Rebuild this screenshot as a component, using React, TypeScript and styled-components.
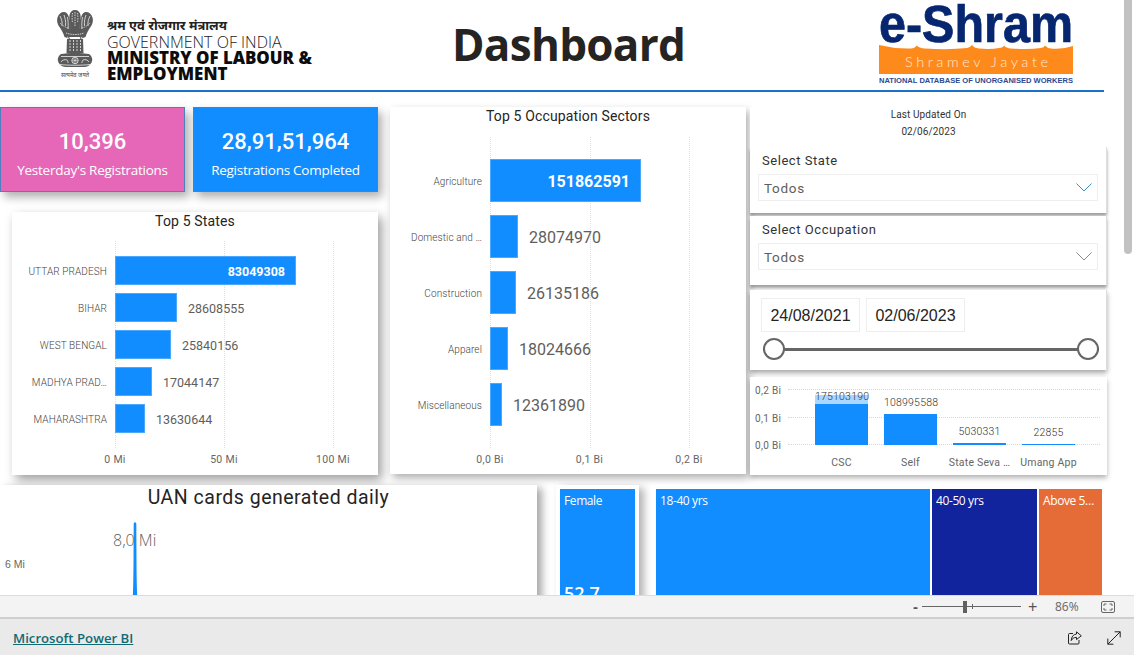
import React from "react";
import styled, { createGlobalStyle } from "styled-components";

const DIN = `Roboto, "Liberation Sans", sans-serif`;
const SEGOE = `"Open Sans", "Noto Sans", sans-serif`;
const BLUE = "#118dff";

const GlobalStyle = createGlobalStyle`
  html, body {
    margin: 0;
    padding: 0;
    height: 100%;
    overflow: hidden;
    background: #fff;
  }
  * { box-sizing: border-box; }
`;

type BarRow = { name: string; value: number; inside?: boolean };

const stateRows: BarRow[] = [
  { name: "UTTAR PRADESH", value: 83049308, inside: true },
  { name: "BIHAR", value: 28608555 },
  { name: "WEST BENGAL", value: 25840156 },
  { name: "MADHYA PRAD…", value: 17044147 },
  { name: "MAHARASHTRA", value: 13630644 },
];

const sectorRows: BarRow[] = [
  { name: "Agriculture", value: 151862591, inside: true },
  { name: "Domestic and …", value: 28074970 },
  { name: "Construction", value: 26135186 },
  { name: "Apparel", value: 18024666 },
  { name: "Miscellaneous", value: 12361890 },
];

const channels = [
  { name: "CSC", value: "175103190", height: 50, overlap: true },
  { name: "Self", value: "108995588", height: 31 },
  { name: "State Seva …", value: "5030331", height: 2 },
  { name: "Umang App", value: "22855", height: 1 },
];

function App() {
  return (
    <Page>
      <GlobalStyle />
      <Canvas>
        <Report>
          <Header>
            <Ministry>
              <Emblem />
              <MinistryText>
                <Hindi>श्रम एवं रोजगार मंत्रालय</Hindi>
                <GovLine>GOVERNMENT OF INDIA</GovLine>
                <MinistryLine>MINISTRY OF LABOUR &amp;</MinistryLine>
                <MinistryLine>EMPLOYMENT</MinistryLine>
              </MinistryText>
            </Ministry>
            <Title>Dashboard</Title>
            <ShramLogo />
          </Header>

          <MainGrid>
            <LeftColumn>
              <StatRow>
                <StatCard $bg="#e667b8">
                  <StatNumber>10,396</StatNumber>
                  <StatLabel>Yesterday's Registrations</StatLabel>
                </StatCard>
                <StatCard $bg={BLUE}>
                  <StatNumber>28,91,51,964</StatNumber>
                  <StatLabel>Registrations Completed</StatLabel>
                </StatCard>
              </StatRow>
              <StatesCard>
                <HBarChart
                  title="Top 5 States"
                  rows={stateRows}
                  labelWidth={103}
                  barHeight={29}
                  rowGap={8}
                  perValue={109 / 50000000}
                  step={109}
                  ticks={["0 Mi", "50 Mi", "100 Mi"]}
                  rowsTop={26}
                  axisTop={20}
                  valueSize={12.5}
                  gridReach={15}
                />
              </StatesCard>
            </LeftColumn>

            <SectorCard>
              <HBarChart
                title="Top 5 Occupation Sectors"
                rows={sectorRows}
                labelWidth={100}
                barHeight={43}
                rowGap={13}
                perValue={99.5 / 100000000}
                step={99.5}
                ticks={["0,0 Bi", "0,1 Bi", "0,2 Bi"]}
                rowsTop={34}
                axisTop={27}
                valueSize={16}
                gridReach={22}
              />
            </SectorCard>

            <RightColumn>
              <LastUpdated>
                <span>Last Updated On</span>
                <span>02/06/2023</span>
              </LastUpdated>
              <SlicerCard $height={66}>
                <SlicerLabel>Select State</SlicerLabel>
                <SelectBox>
                  <span>Todos</span>
                  <Chevron color="#3d8fc4" />
                </SelectBox>
              </SlicerCard>
              <SlicerCard $height={69} $top={3}>
                <SlicerLabel>Select Occupation</SlicerLabel>
                <SelectBox>
                  <span>Todos</span>
                  <Chevron color="#8a8a8a" />
                </SelectBox>
              </SlicerCard>
              <DateCard>
                <DateRow>
                  <DateBox>24/08/2021</DateBox>
                  <DateBox>02/06/2023</DateBox>
                </DateRow>
                <SliderTrack>
                  <SliderThumb />
                  <SliderThumb />
                </SliderTrack>
              </DateCard>
              <ColumnCard>
                <ColumnBody>
                  <YAxis>
                    <span>0,2 Bi</span>
                    <span>0,1 Bi</span>
                    <span>0,0 Bi</span>
                  </YAxis>
                  <ColumnPlot>
                    <HLines>
                      <HLine />
                      <HLine />
                      <HLine />
                    </HLines>
                    {channels.map((c) => (
                      <ColumnSlot key={c.name}>
                        <ColumnValue $overlap={c.overlap}>{c.value}</ColumnValue>
                        <ColumnBar style={{ height: c.height }} />
                      </ColumnSlot>
                    ))}
                  </ColumnPlot>
                </ColumnBody>
                <ColumnNames>
                  {channels.map((c) => (
                    <span key={c.name}>{c.name}</span>
                  ))}
                </ColumnNames>
              </ColumnCard>
            </RightColumn>
          </MainGrid>

          <BottomRow>
            <UanCard>
              <UanTitle>UAN cards generated daily</UanTitle>
              <AxisNote>6 Mi</AxisNote>
              <PeakNote>8,0 Mi</PeakNote>
              <Spike viewBox="0 0 6 75" width="6" height="75">
                <path d="M1.700 1.500 Q3 -1 4.300 1.500 L4.500 40 Q4.600 60 5.200 75 L0.800 75 Q1.400 60 1.500 40 Z" fill={BLUE} />
              </Spike>
            </UanCard>
            <GenderCard>
              <Tile $bg={BLUE} $width={75}>
                Female
                <TileValue>52,7</TileValue>
              </Tile>
            </GenderCard>
            <AgeCard>
              <Tile $bg={BLUE} $width={274}>18-40 yrs</Tile>
              <Tile $bg="#12239e" $width={105}>40-50 yrs</Tile>
              <Tile $bg="#e66c37" $width={63}>Above 5…</Tile>
            </AgeCard>
          </BottomRow>
        </Report>
        <ScrollGutter>
          <ScrollThumb />
        </ScrollGutter>
      </Canvas>

      <ZoomBar>
        <ZoomSign>-</ZoomSign>
        <ZoomSlider>
          <ZoomMark />
          <ZoomTick />
        </ZoomSlider>
        <ZoomPlus>+</ZoomPlus>
        <ZoomPercent>86%</ZoomPercent>
        <FitIcon viewBox="0 0 14 12" width="14" height="12">
          <rect x="0.5" y="0.5" width="13" height="11" rx="1.5" fill="none" stroke="#666" />
          <path d="M3 5V3h2.5M8.5 3H11v2M11 7v2H8.5M5.5 9H3V7" fill="none" stroke="#666" />
        </FitIcon>
      </ZoomBar>

      <Footer>
        <PowerBiLink href="#">Microsoft Power BI</PowerBiLink>
        <FooterIcons>
          <svg viewBox="0 0 14 14" width="14" height="14" fill="none" stroke="#222" strokeWidth="1">
            <path d="M5 2.5H1.5a1 1 0 0 0-1 1v8.5a1 1 0 0 0 1 1h8.5a1 1 0 0 0 1-1V9" />
            <path d="M8.5 0.8 13.3 4.8 8.5 8.6V6.4C6 6.4 4.3 7.4 3.2 9.6 3.4 6 5.2 3.3 8.5 3Z" />
          </svg>
          <svg viewBox="0 0 14 14" width="14" height="14" fill="none" stroke="#222" strokeWidth="1">
            <path d="M0.8 13.2 13.2 0.8M7.6 0.8h5.6v5.6M0.8 7.6v5.6h5.6" />
          </svg>
        </FooterIcons>
      </Footer>
    </Page>
  );
}

type HBarProps = {
  title: string;
  rows: BarRow[];
  labelWidth: number;
  barHeight: number;
  rowGap: number;
  perValue: number;
  step: number;
  ticks: string[];
  rowsTop: number;
  axisTop: number;
  valueSize: number;
  gridReach: number;
};

function HBarChart(props: HBarProps) {
  const { title, rows, labelWidth, barHeight, rowGap, perValue, step, ticks, rowsTop, axisTop, valueSize, gridReach } = props;
  return (
    <>
      <ChartTitle>{title}</ChartTitle>
      <Plot $top={rowsTop} $gap={rowGap}>
        <GridLines $left={labelWidth} $step={step} $reach={gridReach}>
          {ticks.map((t) => (
            <GridLine key={t} />
          ))}
        </GridLines>
        {rows.map((r) => (
          <Row key={r.name} $labelWidth={labelWidth} $height={barHeight}>
            <RowLabel>{r.name}</RowLabel>
            <BarTrack>
              <Bar style={{ width: Math.round(r.value * perValue) }}>
                {r.inside && <InsideValue $size={valueSize}>{r.value}</InsideValue>}
              </Bar>
              {!r.inside && <OutsideValue $size={valueSize}>{r.value}</OutsideValue>}
            </BarTrack>
          </Row>
        ))}
      </Plot>
      <TickRow $left={labelWidth - step / 2} $top={axisTop}>
        {ticks.map((t) => (
          <Tick key={t} $width={step}>{t}</Tick>
        ))}
      </TickRow>
    </>
  );
}

function Emblem() {
  return (
    <EmblemWrap>
      <EmblemArt viewBox="0 0 38 60" width="38" height="60">
        {/* lion capital: three heads, neck, then the abacus with the wheel */}
        <g fill="#5a5a5a">
          <path d="M19 1c-3 0-5 2-5.500 5-.5 3 0 6 1 9l-1 13h11l-1-13c1-3 1.500-6 1-9C24 3 22 1 19 1Z" />
          <path d="M8 3C5 3 2.500 5 1.500 8.500.5 12 1.500 15 3.500 18c2 3 4 6 5 10l5.500 2 1-16c-1-2-1.500-5-2.500-7C11.500 4.500 10 3 8 3Z" />
          <path d="M30 3c3 0 5.500 2 6.500 5.500 1 3.500 0 6.500-2 9.500s-4 6-5 10L24 30l-1-16c1-2 1.500-5 2.500-7C26.500 4.500 28 3 30 3Z" />
          <path d="M11 30h16l.5 14h-17Z" />
          <path d="M5 45c6-1.500 22-1.500 28 0 3 2 4 5.500 2.500 8.500-1.500 3-4.500 4.500-7.500 4.500H10c-3 0-6-1.500-7.500-4.500C1 50.500 2 47 5 45Z" />
        </g>
        <g fill="none" stroke="#fff" strokeWidth="0.8" opacity="0.9">
          <path d="M4 7c1.500 3 2.500 6 2 10M8 6c1 3 2 6 1.500 11M11.500 8c.5 4 1 7 .5 12M34 7c-1.500 3-2.500 6-2 10M30 6c-1 3-2 6-1.500 11M26.500 8c-.5 4-1 7-.5 12" />
          <path d="M16.500 4c-.5 3-.5 7 0 10M19 3v14M21.500 4c.5 3 .5 7 0 10" strokeDasharray="1.500 1" />
          <path d="M4 14c3 3 6 5 9 5M34 14c-3 3-6 5-9 5" strokeDasharray="1 1" />
          <path d="M10 24c5 2 13 2 18 0M11 28c4 1.500 12 1.500 16 0" strokeDasharray="1.500 0.8" />
          <path d="M14 31v12M17.500 31v12M21 31v12M24.500 31v12" strokeDasharray="2 1" />
          <path d="M5 47.500h28M4 55.500c8 1 22 1 30 0" />
          <circle cx="19" cy="51.500" r="3.200" />
          <path d="M19 48.300v6.400M15.800 51.500h6.400M16.700 49.200l4.600 4.600M21.300 49.200l-4.600 4.600" strokeWidth="0.5" />
          <path d="M5 53c1-2 4-3 6-2 1 1 1 2 1 3M33 53c-1-2-4-3-6-2-1 1-1 2-1 3" />
        </g>
      </EmblemArt>
      <EmblemMotto>सत्यमेव जयते</EmblemMotto>
    </EmblemWrap>
  );
}

function ShramLogo() {
  return (
    <LogoArt viewBox="0 0 194 84" width="194" height="84">
      <text x="0" y="40" fontFamily='"Liberation Sans", sans-serif' fontWeight="700" fontSize="51" fill="#06266f" stroke="#06266f" strokeWidth="0.7" textLength="194" lengthAdjust="spacingAndGlyphs">
        e-Shram
      </text>
      <path
        d="M0 43 Q16 47 32 46.500 Q36 46 38 43.500 Q40 46 46 46.500 Q70 48 88 46 Q91 45.500 93 43 Q95 46 100 46.500 Q112 47.500 120 46 Q124 45.500 125 43.500 Q127 46 132 46.500 Q150 47.500 162 46 Q165 45.500 166 43.500 Q168 46 172 46.500 Q184 47.500 194 44 V72 H0 Z"
        fill="#ff8a1c"
      />
      <text x="26" y="65" fontFamily="Lato, sans-serif" fontWeight="300" fontSize="14.500" fill="#ffe9cf" textLength="143" lengthAdjust="spacing">
        Shramev Jayate
      </text>
      <text x="0" y="81" fontFamily='"Liberation Sans", sans-serif' fontWeight="700" fontSize="7.300" fill="#2c4a94" textLength="194" lengthAdjust="spacingAndGlyphs">
        NATIONAL DATABASE OF UNORGANISED WORKERS
      </text>
    </LogoArt>
  );
}

function Chevron({ color }: { color: string }) {
  return (
    <svg viewBox="0 0 16 9" width="16" height="9" fill="none" stroke={color} strokeWidth="1">
      <path d="M0.500 0.500 8 8 15.500 0.500" />
    </svg>
  );
}

const Page = styled.div`
  width: 1134px;
  height: 655px;
  display: flex;
  flex-direction: column;
  overflow: hidden;
  background: #fff;
`;

const Canvas = styled.div`
  height: 595px;
  display: flex;
  overflow: hidden;
`;

const Report = styled.div`
  width: 1124px;
  flex: none;
`;

const ScrollGutter = styled.div`
  flex: 1;
`;

const ScrollThumb = styled.div`
  width: 8px;
  height: 254px;
  background: #c2c2c2;
  border-radius: 0 0 4px 4px;
`;

const Header = styled.header`
  width: 1104px;
  height: 92px;
  padding-left: 55px;
  border-bottom: 2px solid #1a73c9;
  display: grid;
  grid-template-columns: 397px 427px 194px;
`;

const Ministry = styled.div`
  display: flex;
  gap: 12px;
  padding-top: 9px;
`;

const EmblemWrap = styled.div`
  width: 40px;
  display: flex;
  flex-direction: column;
  align-items: center;
`;

const EmblemArt = styled.svg`
  filter: blur(0.3px);
`;

const EmblemMotto = styled.span`
  margin-top: 2px;
  font-family: "Noto Sans", "DejaVu Sans", sans-serif;
  font-size: 5.800px;
  line-height: 9px;
  color: #444;
  white-space: nowrap;
`;

const MinistryText = styled.div`
  display: flex;
  flex-direction: column;
  padding-top: 7px;
`;

const Hindi = styled.span`
  font-family: "Noto Sans", "DejaVu Sans", sans-serif;
  font-size: 13px;
  font-weight: 700;
  line-height: 18px;
  color: #222;
  white-space: nowrap;
`;

const GovLine = styled.span`
  font-family: ${SEGOE};
  font-size: 16px;
  font-weight: 300;
  line-height: 16px;
  color: #222;
  white-space: nowrap;
`;

const MinistryLine = styled.span`
  font-family: ${SEGOE};
  font-size: 16.900px;
  font-weight: 800;
  line-height: 16px;
  color: #0c0c0c;
  white-space: nowrap;
`;

const Title = styled.h1`
  margin: 0;
  padding-top: 10px;
  font-family: ${SEGOE};
  font-size: 44px;
  font-weight: 700;
  line-height: 68px;
  letter-spacing: -0.7px;
  color: #252423;
`;

const LogoArt = styled.svg`
  margin-top: 2px;
`;

const MainGrid = styled.div`
  margin-top: 15px;
  display: grid;
  grid-template-columns: 378px 356px 357px;
  column-gap: 12px;
  height: 368px;
`;

const LeftColumn = styled.div`
  display: flex;
  flex-direction: column;
  gap: 20px;
`;

const StatRow = styled.div`
  display: flex;
  gap: 8px;
`;

const StatCard = styled.div<{ $bg: string }>`
  width: 185px;
  height: 85px;
  padding-top: 20px;
  display: flex;
  flex-direction: column;
  align-items: center;
  background: ${(p) => p.$bg};
  border: 1px solid #4f80bd;
  box-shadow: 4px 5px 9px rgba(0, 0, 0, 0.32);
  color: #fff;
`;

const StatNumber = styled.span`
  font-family: ${DIN};
  font-size: 22px;
  font-weight: 500;
  line-height: 28px;
`;

const StatLabel = styled.span`
  font-family: ${SEGOE};
  font-size: 13.500px;
  font-weight: 400;
  line-height: 20px;
  margin-top: 4px;
  letter-spacing: -0.25px;
  white-space: nowrap;
`;

const StatesCard = styled.div`
  margin-left: 12px;
  width: 366px;
  height: 263px;
  background: #fff;
  box-shadow: 4px 5px 10px rgba(0, 0, 0, 0.38);
`;

const SectorCard = styled.div`
  width: 356px;
  height: 367px;
  background: #fff;
  box-shadow: 3px 4px 8px rgba(0, 0, 0, 0.32);
`;

const ChartTitle = styled.div`
  font-family: ${DIN};
  font-size: 14px;
  line-height: 18px;
  letter-spacing: 0.15px;
  text-align: center;
  color: #252423;
`;

const Plot = styled.div<{ $top: number; $gap: number }>`
  position: relative;
  margin-top: ${(p) => p.$top}px;
  display: flex;
  flex-direction: column;
  gap: ${(p) => p.$gap}px;
`;

const GridLines = styled.div<{ $left: number; $step: number; $reach: number }>`
  position: absolute;
  left: ${(p) => p.$left}px;
  top: -${(p) => p.$reach}px;
  bottom: -${(p) => p.$reach}px;
  display: flex;
  gap: ${(p) => p.$step - 1}px;
`;

const GridLine = styled.i`
  width: 1px;
  border-left: 1px dotted #e0e0e0;
`;

const Row = styled.div<{ $labelWidth: number; $height: number }>`
  position: relative;
  display: grid;
  grid-template-columns: ${(p) => p.$labelWidth}px 1fr;
  height: ${(p) => p.$height}px;
  align-items: center;
`;

const RowLabel = styled.span`
  padding: 2px 8px 0 0;
  font-family: ${DIN};
  font-size: 10px;
  font-weight: 300;
  letter-spacing: 0.1px;
  text-align: right;
  color: #444;
  white-space: nowrap;
`;

const BarTrack = styled.div`
  height: 100%;
  display: flex;
  align-items: center;
`;

const Bar = styled.div`
  height: 100%;
  display: flex;
  align-items: center;
  justify-content: flex-end;
  background: ${BLUE};
  box-shadow: inset 0 0 0 1px #4aa8ff;
`;

const InsideValue = styled.span<{ $size: number }>`
  padding: 2px 11px 0 0;
  font-family: ${DIN};
  font-size: ${(p) => p.$size}px;
  font-weight: 700;
  color: #fff;
`;

const OutsideValue = styled.span<{ $size: number }>`
  padding: 2px 0 0 11px;
  font-family: ${DIN};
  font-size: ${(p) => p.$size}px;
  color: #605e5c;
`;

const TickRow = styled.div<{ $left: number; $top: number }>`
  display: flex;
  margin-top: ${(p) => p.$top}px;
  padding-left: ${(p) => p.$left}px;
`;

const Tick = styled.span<{ $width: number }>`
  width: ${(p) => p.$width}px;
  flex: none;
  text-align: center;
  font-family: ${DIN};
  font-size: 10.500px;
  line-height: 14px;
  letter-spacing: 0.3px;
  color: #666;
`;

const RightColumn = styled.div`
  margin-left: -8px;
  width: 357px;
  display: flex;
  flex-direction: column;
`;

const LastUpdated = styled.div`
  height: 40px;
  display: flex;
  flex-direction: column;
  align-items: center;
  gap: 2px;
  background: #fff;
  font-family: ${DIN};
  font-size: 10px;
  line-height: 15px;
  letter-spacing: 0.1px;
  color: #333;
`;

const SlicerCard = styled.div<{ $height: number; $top?: number }>`
  height: ${(p) => p.$height}px;
  margin-top: ${(p) => p.$top ?? 0}px;
  padding: 5px 8px 0;
  background: #fff;
  border-right: 1px solid #ddd;
  box-shadow: 0 3px 3px rgba(0, 0, 0, 0.38);
`;

const SlicerLabel = styled.div`
  padding-left: 4px;
  font-family: ${DIN};
  font-size: 13px;
  line-height: 18px;
  letter-spacing: 0.55px;
  color: #333;
`;

const SelectBox = styled.div`
  height: 27px;
  margin-top: 4px;
  padding: 0 5px;
  display: flex;
  align-items: center;
  justify-content: space-between;
  border: 1px solid #eee;
  font-family: ${DIN};
  font-size: 13.500px;
  letter-spacing: 0.7px;
  color: #605e5c;
`;

const DateCard = styled.div`
  height: 80px;
  margin-top: 5px;
  padding: 8px 7px 0 11px;
  background: #fff;
  border-right: 1px solid #ddd;
  box-shadow: 0 3px 5px rgba(0, 0, 0, 0.35);
`;

const DateRow = styled.div`
  display: flex;
  gap: 6px;
`;

const DateBox = styled.div`
  width: 99px;
  height: 34px;
  padding-top: 1px;
  display: flex;
  align-items: center;
  justify-content: center;
  border: 1px solid #eee;
  font-family: "Liberation Sans", sans-serif;
  font-size: 16px;
  color: #252423;
`;

const SliderTrack = styled.div`
  margin: 6px 0 0 2px;
  height: 22px;
  display: flex;
  justify-content: space-between;
  align-items: center;
  background: linear-gradient(#666, #666) center / 100% 3px no-repeat;
`;

const SliderThumb = styled.i`
  width: 22px;
  height: 22px;
  border: 2px solid #666;
  border-radius: 50%;
  background: #fff;
`;

const ColumnCard = styled.div`
  height: 98px;
  margin-top: 7px;
  padding: 12px 0 0 5px;
  background: #fff;
  box-shadow: 0 3px 5px rgba(0, 0, 0, 0.3);
`;

const ColumnBody = styled.div`
  display: flex;
`;

const YAxis = styled.div`
  width: 33px;
  height: 56px;
  display: flex;
  flex-direction: column;
  justify-content: space-between;
  font-family: ${DIN};
  font-size: 10px;
  letter-spacing: 0.3px;
  color: #666;

  span {
    height: 1px;
    line-height: 3px;
  }
`;

const ColumnPlot = styled.div`
  position: relative;
  width: 312px;
  height: 56px;
  padding-left: 27px;
  display: flex;
  gap: 16px;
  align-items: flex-end;
`;

const HLines = styled.div`
  position: absolute;
  inset: 0;
  display: flex;
  flex-direction: column;
  justify-content: space-between;
`;

const HLine = styled.i`
  border-top: 1px dotted #d8d8d8;
`;

const ColumnSlot = styled.div`
  position: relative;
  width: 53px;
  display: flex;
  flex-direction: column;
  align-items: center;
`;

const ColumnValue = styled.span<{ $overlap?: boolean }>`
  position: relative;
  width: 100%;
  margin-bottom: ${(p) => (p.$overlap ? -9 : 4)}px;
  white-space: nowrap;
  text-align: center;
  font-family: ${DIN};
  font-size: 10.500px;
  font-weight: 300;
  line-height: 14px;
  letter-spacing: 0.2px;
  color: #333;
  background: ${(p) => (p.$overlap ? "rgba(255, 255, 255, 0.65)" : "transparent")};
  z-index: 1;
`;

const ColumnBar = styled.div`
  width: 100%;
  background: ${BLUE};
`;

const ColumnNames = styled.div`
  margin-top: 11px;
  padding-left: 60px;
  display: flex;
  gap: 16px;

  span {
    width: 53px;
    white-space: nowrap;
    display: flex;
    justify-content: center;
    font-family: ${DIN};
    font-size: 10.500px;
    letter-spacing: 0.2px;
    color: #666;
  }
`;

const BottomRow = styled.div`
  margin-top: 10px;
  display: flex;
  height: 200px;
`;

const UanCard = styled.div`
  position: relative;
  width: 537px;
  height: 200px;
  padding-top: 1px;
  background: #fff;
  box-shadow: 5px 3px 8px rgba(0, 0, 0, 0.35);
`;

const UanTitle = styled.div`
  font-family: ${DIN};
  font-size: 19.500px;
  line-height: 24px;
  letter-spacing: 0.5px;
  text-align: center;
  color: #252423;
`;

const AxisNote = styled.span`
  position: absolute;
  left: 5px;
  top: 73px;
  font-family: "Liberation Sans", sans-serif;
  font-size: 10.500px;
  color: #666;
`;

const PeakNote = styled.span`
  position: absolute;
  left: 113px;
  top: 44px;
  font-family: ${SEGOE};
  font-size: 16px;
  font-weight: 300;
  color: #605e5c;
`;

const Spike = styled.svg`
  position: absolute;
  left: 132px;
  top: 37px;
`;

const GenderCard = styled.div`
  width: 83px;
  height: 200px;
  margin-left: 19px;
  padding: 4px 4px 0;
  display: flex;
  background: #fff;
  box-shadow: 5px 3px 8px rgba(0, 0, 0, 0.3);
`;

const AgeCard = styled.div`
  width: 456px;
  height: 200px;
  margin-left: 12px;
  padding: 4px 5px 0;
  display: flex;
  gap: 2px;
  background: #fff;
`;

const Tile = styled.div<{ $bg: string; $width: number }>`
  flex: 0 0 ${(p) => p.$width}px;
  min-width: 0;
  height: 130px;
  padding: 4px 4px;
  background: ${(p) => p.$bg};
  font-family: ${SEGOE};
  font-size: 12px;
  line-height: 16px;
  letter-spacing: -0.4px;
  color: #fff;
  white-space: nowrap;
`;

const TileValue = styled.div`
  margin-top: 70px;
  font-size: 18px;
  line-height: 28px;
  font-weight: 600;
  letter-spacing: 0;
`;

const ZoomBar = styled.div`
  height: 24px;
  flex: none;
  position: relative;
  z-index: 2;
  padding-left: 912px;
  display: flex;
  align-items: center;
  background: #f3f3f3;
  border-top: 1px solid #dcdcdc;
  border-bottom: 2px solid #cfcfcf;
`;

const ZoomSign = styled.span`
  width: 7px;
  font-family: "Liberation Sans", sans-serif;
  font-size: 15px;
  font-weight: 700;
  color: #555;
  text-align: center;
`;

const ZoomPlus = styled(ZoomSign)`
  font-size: 16px;
  font-weight: 400;
`;

const ZoomSlider = styled.div`
  width: 99px;
  height: 12px;
  margin: 0 7px 0 3px;
  display: flex;
  align-items: center;
  background: linear-gradient(#666, #666) center / 100% 1px no-repeat;
`;

const ZoomMark = styled.i`
  margin-left: 41px;
  width: 4px;
  height: 12px;
  background: #606060;
`;

const ZoomTick = styled.i`
  margin-left: 5px;
  width: 1px;
  height: 5px;
  background: #666;
`;

const ZoomPercent = styled.span`
  margin-left: 20px;
  width: 24px;
  font-family: ${SEGOE};
  font-size: 12px;
  color: #666;
`;

const FitIcon = styled.svg`
  margin-left: 22px;
`;

const Footer = styled.footer`
  flex: 1;
  padding: 2px 13px 0;
  display: flex;
  align-items: center;
  justify-content: space-between;
  background: #eaeaea;
`;

const PowerBiLink = styled.a`
  font-family: ${SEGOE};
  font-size: 13.200px;
  font-weight: 600;
  color: #0f6a74;
  text-decoration: underline;
`;

const FooterIcons = styled.div`
  display: flex;
  gap: 25px;
`;

export default App;
